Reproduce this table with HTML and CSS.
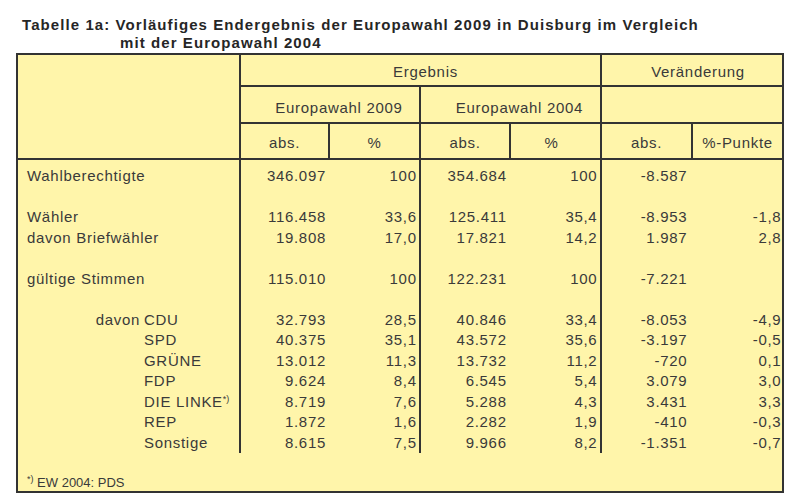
FILE: index.html
```html
<!DOCTYPE html>
<html lang="de">
<head>
<meta charset="utf-8">
<title>Tabelle 1a</title>
<link rel="stylesheet" href="styles.css">
</head>
<body>
<div class="page">
  <div class="title">
    <div class="t1">Tabelle 1a: Vorläufiges Endergebnis der Europawahl 2009 in Duisburg im Vergleich</div>
    <div class="t2">mit der Europawahl 2004</div>
  </div>
  <div class="tbl">
    <div class="h hl br"></div>
    <div class="h s4 br erg">Ergebnis</div>
    <div class="h s2 ver">Veränderung</div>

    <div class="h r2 s2 br ew">Europawahl 2009</div>
    <div class="h r2 s2 br ew">Europawahl 2004</div>
    <div class="h r2 s2"></div>

    <div class="h br">abs.</div>
    <div class="h br">%</div>
    <div class="h br">abs.</div>
    <div class="h br pct4">%</div>
    <div class="h br">abs.</div>
    <div class="h">%-Punkte</div>

    <div class="row">
      <div class="c sp sep"></div><div class="c sp"></div><div class="c sp sep"></div><div class="c sp"></div><div class="c sp sep"></div><div class="c sp"></div><div class="c sp"></div>
    </div>

    <div class="row">
      <div class="c lab sep">Wahlberechtigte</div>
      <div class="c n2">346.097</div><div class="c n3 sep">100</div>
      <div class="c n4">354.684</div><div class="c n5 sep">100</div>
      <div class="c n6">-8.587</div><div class="c n7"></div>
    </div>
    <div class="row">
      <div class="c lab sep"></div><div class="c"></div><div class="c sep"></div><div class="c"></div><div class="c sep"></div><div class="c"></div><div class="c"></div>
    </div>
    <div class="row">
      <div class="c lab sep">Wähler</div>
      <div class="c n2">116.458</div><div class="c n3 sep">33,6</div>
      <div class="c n4">125.411</div><div class="c n5 sep">35,4</div>
      <div class="c n6">-8.953</div><div class="c n7">-1,8</div>
    </div>
    <div class="row">
      <div class="c lab sep">davon Briefwähler</div>
      <div class="c n2">19.808</div><div class="c n3 sep">17,0</div>
      <div class="c n4">17.821</div><div class="c n5 sep">14,2</div>
      <div class="c n6">1.987</div><div class="c n7">2,8</div>
    </div>
    <div class="row">
      <div class="c lab sep"></div><div class="c"></div><div class="c sep"></div><div class="c"></div><div class="c sep"></div><div class="c"></div><div class="c"></div>
    </div>
    <div class="row">
      <div class="c lab sep">gültige Stimmen</div>
      <div class="c n2">115.010</div><div class="c n3 sep">100</div>
      <div class="c n4">122.231</div><div class="c n5 sep">100</div>
      <div class="c n6">-7.221</div><div class="c n7"></div>
    </div>
    <div class="row">
      <div class="c lab sep"></div><div class="c"></div><div class="c sep"></div><div class="c"></div><div class="c sep"></div><div class="c"></div><div class="c"></div>
    </div>
    <div class="row">
      <div class="c lab party sep"><span class="davon">davon</span><span>CDU</span></div>
      <div class="c n2">32.793</div><div class="c n3 sep">28,5</div>
      <div class="c n4">40.846</div><div class="c n5 sep">33,4</div>
      <div class="c n6">-8.053</div><div class="c n7">-4,9</div>
    </div>
    <div class="row">
      <div class="c lab party sep"><span class="davon"></span><span>SPD</span></div>
      <div class="c n2">40.375</div><div class="c n3 sep">35,1</div>
      <div class="c n4">43.572</div><div class="c n5 sep">35,6</div>
      <div class="c n6">-3.197</div><div class="c n7">-0,5</div>
    </div>
    <div class="row">
      <div class="c lab party sep"><span class="davon"></span><span>GRÜNE</span></div>
      <div class="c n2">13.012</div><div class="c n3 sep">11,3</div>
      <div class="c n4">13.732</div><div class="c n5 sep">11,2</div>
      <div class="c n6">-720</div><div class="c n7">0,1</div>
    </div>
    <div class="row">
      <div class="c lab party sep"><span class="davon"></span><span>FDP</span></div>
      <div class="c n2">9.624</div><div class="c n3 sep">8,4</div>
      <div class="c n4">6.545</div><div class="c n5 sep">5,4</div>
      <div class="c n6">3.079</div><div class="c n7">3,0</div>
    </div>
    <div class="row">
      <div class="c lab party sep"><span class="davon"></span><span>DIE LINKE<sup class="fn">*)</sup></span></div>
      <div class="c n2">8.719</div><div class="c n3 sep">7,6</div>
      <div class="c n4">5.288</div><div class="c n5 sep">4,3</div>
      <div class="c n6">3.431</div><div class="c n7">3,3</div>
    </div>
    <div class="row">
      <div class="c lab party sep"><span class="davon"></span><span>REP</span></div>
      <div class="c n2">1.872</div><div class="c n3 sep">1,6</div>
      <div class="c n4">2.282</div><div class="c n5 sep">1,9</div>
      <div class="c n6">-410</div><div class="c n7">-0,3</div>
    </div>
    <div class="row">
      <div class="c lab party sep"><span class="davon"></span><span>Sonstige</span></div>
      <div class="c n2">8.615</div><div class="c n3 sep">7,5</div>
      <div class="c n4">9.966</div><div class="c n5 sep">8,2</div>
      <div class="c n6">-1.351</div><div class="c n7">-0,7</div>
    </div>

    <div class="foot"><sup class="fn">*)</sup> EW 2004: PDS</div>
  </div>
</div>
</body>
</html>
```

FILE: styles.css
```css
html, body {
  margin: 0;
  padding: 0;
  background: #ffffff;
}

body {
  font-family: "Liberation Sans", Arial, sans-serif;
  color: #3a3a3a;
}

.page {
  padding: 16px 0 0 16px;
  width: 768px;
}

.title {
  padding-left: 6px;
  font-weight: bold;
  font-size: 15px;
  line-height: 18px;
  letter-spacing: 1.08px;
  color: #262626;
  white-space: nowrap;
}

.t2 {
  padding-left: 98px;
}

.tbl {
  margin-top: 1px;
  width: 768px;
  box-sizing: border-box;
  display: grid;
  grid-template-columns: 223px 89px 91px 90px 91px 91px 89px;
  grid-template-rows: 32px 37px 36px;
  border: 2px solid #333333;
  background: #fff5aa;
  font-size: 15px;
  letter-spacing: 0.7px;
}

.row {
  display: contents;
}

.h {
  box-sizing: border-box;
  display: flex;
  align-items: center;
  justify-content: center;
  border-bottom: 2px solid #333333;
  padding-top: 3px;
  white-space: nowrap;
}

.hl {
  grid-row: 1 / span 3;
}

.r2 {
  padding-top: 5px;
}

.s2 {
  grid-column: span 2;
}

.s4 {
  grid-column: span 4;
}

.br {
  border-right: 2px solid #333333;
}

.erg {
  padding-left: 10px;
}

.ew {
  padding-left: 18px;
}

.ver {
  padding-left: 12px;
}

.pct4 {
  padding-right: 8px;
}

.c {
  box-sizing: border-box;
  height: 20.5px;
  line-height: 20.5px;
  white-space: nowrap;
}

.c.sp {
  height: 6px;
}

.sep {
  border-right: 2px solid #333333;
}

.lab {
  padding-left: 9px;
}

.party {
  display: flex;
}

.davon {
  display: inline-block;
  width: 117px;
  box-sizing: border-box;
  padding-right: 4px;
  text-align: right;
}

.n2, .n3, .n4, .n5, .n6, .n7 {
  text-align: right;
}

.n2 { padding-right: 4px; }
.n3 { padding-right: 2.3px; }
.n4 { padding-right: 4.3px; }
.n5 { padding-right: 2.6px; }
.n6 { padding-right: 5.6px; }
.n7 { padding-right: 0.6px; }

.fn {
  font-size: 9px;
  line-height: 0;
  letter-spacing: 0;
  vertical-align: 5px;
}

.foot {
  grid-column: 1 / -1;
  box-sizing: border-box;
  height: 38px;
  padding: 22px 0 0 9px;
  font-size: 13px;
  line-height: 16px;
  letter-spacing: 0;
}
```
